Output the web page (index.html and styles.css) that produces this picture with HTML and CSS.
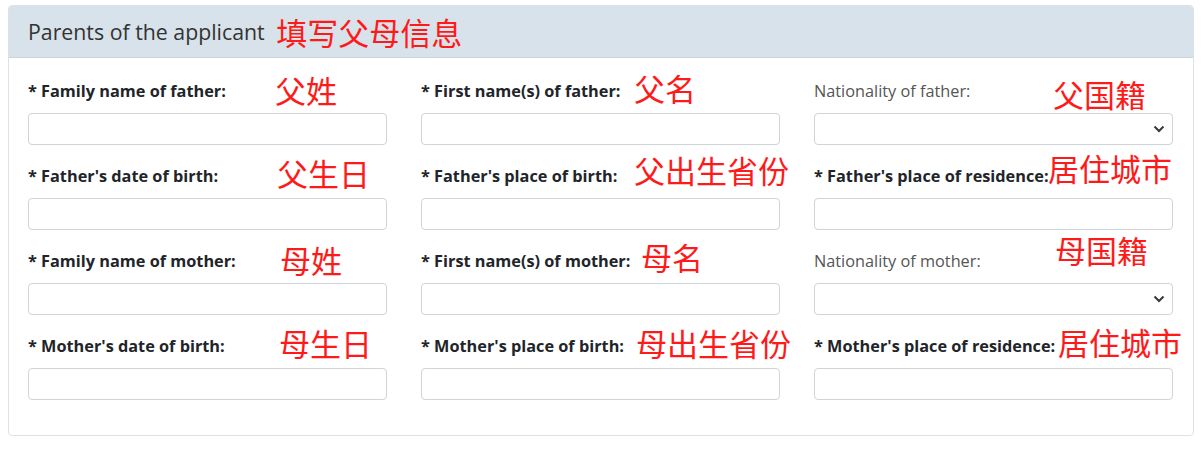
FILE: index.html
```html
<!DOCTYPE html>
<html lang="en">
<head>
    <meta charset="UTF-8">
    <meta name="viewport" content="width=device-width, initial-scale=1.0">
    <title>Parents of the applicant</title>
    <link rel="stylesheet" href="styles.css">
</head>
<body>
<div class="card">
    <div class="card-header">
        Parents of the applicant
        <span class="note-title">填写父母信息</span>
    </div>
    <div class="card-body">
        <div class="field">
            <label>* Family name of father:</label>
            <input type="text">
            <span class="note">父姓</span>
        </div>
        <div class="field">
            <label>* First name(s) of father:</label>
            <input type="text">
            <span class="note">父名</span>
        </div>
        <div class="field">
            <label class="optional">Nationality of father:</label>
            <select><option></option></select>
            <span class="note">父国籍</span>
        </div>

        <div class="field">
            <label>* Father's date of birth:</label>
            <input type="text">
            <span class="note">父生日</span>
        </div>
        <div class="field">
            <label>* Father's place of birth:</label>
            <input type="text">
            <span class="note">父出生省份</span>
        </div>
        <div class="field">
            <label>* Father's place of residence:</label>
            <input type="text">
            <span class="note">居住城市</span>
        </div>

        <div class="field">
            <label>* Family name of mother:</label>
            <input type="text">
            <span class="note">母姓</span>
        </div>
        <div class="field">
            <label>* First name(s) of mother:</label>
            <input type="text">
            <span class="note">母名</span>
        </div>
        <div class="field">
            <label class="optional">Nationality of mother:</label>
            <select><option></option></select>
            <span class="note">母国籍</span>
        </div>

        <div class="field">
            <label>* Mother's date of birth:</label>
            <input type="text">
            <span class="note">母生日</span>
        </div>
        <div class="field">
            <label>* Mother's place of birth:</label>
            <input type="text">
            <span class="note">母出生省份</span>
        </div>
        <div class="field">
            <label>* Mother's place of residence:</label>
            <input type="text">
            <span class="note">居住城市</span>
        </div>
    </div>
</div>
</body>
</html>
```

FILE: styles.css
```css
body {
    font-family: "Open Sans", "Noto Sans", sans-serif;
    margin: 5px 8px;
    background: #fff;
    color: #212529;
}
.card {
    width: 1186px;
    border: 1px solid #dde2e6;
    border-radius: 4px;
    box-sizing: border-box;
}
.card-header {
    background: #d7e2ea;
    border-bottom: 1px solid #c9d4dc;
    padding: 10px 19px;
    line-height: 31px;
    font-size: 21.3px;
    color: #333;
    border-radius: 3px 3px 0 0;
}
.note-title {
    font-family: "Noto Sans CJK SC", sans-serif;
    font-size: 31px;
    color: #ff1a1a;
    margin-left: 6px;
    vertical-align: top;
    line-height: 31px;
}
.card-body {
    display: grid;
    grid-template-columns: repeat(3, 1fr);
    column-gap: 34px;
    row-gap: 21px;
    padding: 23px 20px 35px 19px;
}
.field {
    position: relative;
}
.field label {
    display: block;
    height: 20px;
    line-height: 20px;
    margin-bottom: 12px;
    font-size: 16.3px;
    font-weight: 700;
    color: #212529;
    white-space: nowrap;
}
.field label.optional {
    font-weight: 400;
    color: #555;
}
.field input,
.field select {
    display: block;
    width: 100%;
    height: 32px;
    box-sizing: border-box;
    border: 1px solid #ced4da;
    border-radius: 4px;
    background-color: #fff;
    font-family: inherit;
}
.field select {
    appearance: none;
    -webkit-appearance: none;
    background-image: url("data:image/svg+xml,%3csvg xmlns='http://www.w3.org/2000/svg' width='12' height='8' viewBox='0 0 12 8'%3e%3cpath fill='none' stroke='%23343a40' stroke-width='2' d='M1.5 1.5l4.5 4.5 4.5-4.5'/%3e%3c/svg%3e");
    background-repeat: no-repeat;
    background-position: right 7px center;
    background-size: 12px 8px;
}

/* red annotations laid over the form */
.note {
    position: absolute;
    font-family: "Noto Sans CJK SC", sans-serif;
    font-size: 31px;
    line-height: 1;
    color: #ff1a1a;
    white-space: nowrap;
}
.field:nth-child(3n+1) .note { left: 247px; }
.field:nth-child(3n+2) .note { left: 213px; }
.field:nth-child(3n) .note { left: 239px; }

.field:nth-child(1) .note { top: -7px; }
.field:nth-child(2) .note { top: -9px; }
.field:nth-child(3) .note { top: -3px; }
.field:nth-child(4) .note { top: -9px; left: 249px; }
.field:nth-child(5) .note { top: -12px; }
.field:nth-child(6) .note { top: -14px; left: 234px; }
.field:nth-child(7) .note { top: -7px; left: 252px; }
.field:nth-child(8) .note { top: -10px; left: 220px; }
.field:nth-child(9) .note { top: -17px; left: 241px; }
.field:nth-child(10) .note { top: -9px; left: 251px; }
.field:nth-child(11) .note { top: -9px; left: 215px; }
.field:nth-child(12) .note { top: -10px; left: 244px; }
```
